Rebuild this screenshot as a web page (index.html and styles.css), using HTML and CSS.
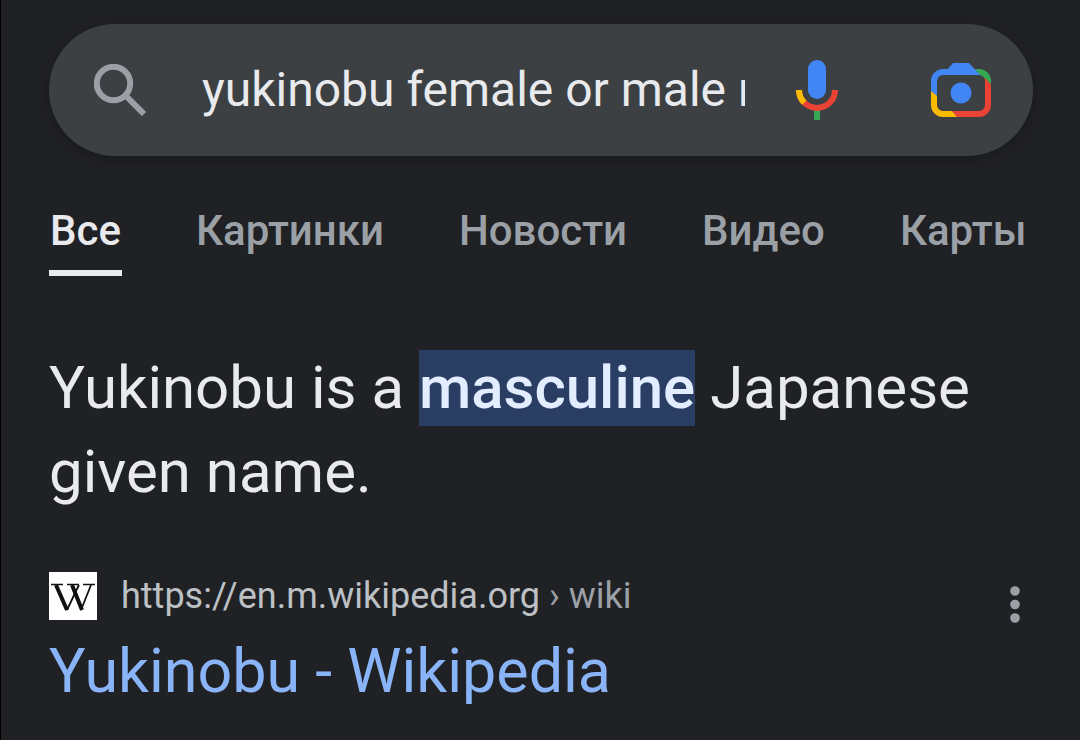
FILE: index.html
```html
<!DOCTYPE html>
<html lang="ru">
<head>
<meta charset="utf-8">
<meta name="viewport" content="width=device-width, initial-scale=1">
<title>yukinobu</title>
<link rel="stylesheet" href="styles.css">
</head>
<body>
<header>
  <form class="search" role="search">
    <button class="icon-button" type="submit" aria-label="Поиск">
      <svg width="52" height="52" viewBox="0 0 52 52" fill="none" stroke="#9aa0a6" stroke-width="6"><circle cx="19.5" cy="19.5" r="16.7"/><path d="M32 32 50 50"/></svg>
    </button>
    <input class="query" type="text" aria-label="Запрос" value="yukinobu female or male name">
    <button class="icon-button" type="button" aria-label="Голосовой поиск">
      <svg width="42" height="60" viewBox="0 0 42 60"><rect x="12" width="18" height="39" rx="9" fill="#4285f4"/><path d="M18 50h6v10h-6z" fill="#34a853"/><path d="M3 30a18 18 0 0 0 36 0" fill="none" stroke="#ea4335" stroke-width="6"/><path d="M3 30a18 18 0 0 0 5.3 12.7" fill="none" stroke="#fbbc04" stroke-width="6"/></svg>
    </button>
    <button class="icon-button lens" type="button" aria-label="Поиск по картинке">
      <svg width="60" height="54" viewBox="0 0 60 54">
        <defs>
          <clipPath id="c1"><path d="M30 30 6 33 0 28V0h39l10 12z"/></clipPath>
          <clipPath id="c2"><path d="M30 30 49 12 39 0h21v21.5L54 15z"/></clipPath>
          <clipPath id="c3"><path d="M30 30 54 15l6 6.500V54H26l-5-6z"/></clipPath>
          <clipPath id="c4"><path d="M30 30 21 48l5 6H0V28l6 5z"/></clipPath>
        </defs>
        <g fill="none" stroke-width="6">
          <rect x="3" y="9" width="54" height="42" rx="9" stroke="#4285f4" clip-path="url(#c1)"/>
          <rect x="3" y="9" width="54" height="42" rx="9" stroke="#34a853" clip-path="url(#c2)"/>
          <rect x="3" y="9" width="54" height="42" rx="9" stroke="#ea4335" clip-path="url(#c3)"/>
          <rect x="3" y="9" width="54" height="42" rx="9" stroke="#fbbc04" clip-path="url(#c4)"/>
        </g>
        <path d="M16 7 22 0h16l11 12H16z" fill="#4285f4"/><circle cx="30" cy="30" r="10.500" fill="#4285f4"/>
      </svg>
    </button>
  </form>
  <nav class="tabs">
    <a class="tab active" href="#all" aria-current="page">Все</a>
    <a class="tab" href="#images">Картинки</a>
    <a class="tab" href="#news">Новости</a>
    <a class="tab" href="#video">Видео</a>
    <a class="tab" href="#maps">Карты</a>
  </nav>
</header>
<main>
  <p class="answer">Yukinobu is a <mark>masculine</mark> Japanese given name.</p>
  <article>
    <div class="source">
      <svg class="favicon" width="48" height="48" viewBox="0 0 48 48" aria-hidden="true"><path fill="#fff" d="M0 0h48v48H0z"/><g fill="none" stroke="#111"><path d="M2 12.500h12M18 12.500h12M34 12.500h12" stroke-width="1.500"/><path d="M7 13l11 25M23 13l10 25" stroke-width="4"/><path d="M18 38l9-19 3-6M32 38l10-25" stroke-width="1.800"/></g></svg>
      <cite class="url">https://en.m.wikipedia.org <span class="crumb">› wiki</span></cite>
      <button class="more" type="button" aria-label="Ещё"><svg width="10" height="38" viewBox="0 0 10 38" fill="#9aa0a6"><circle cx="5" cy="5" r="4.800"/><circle cx="5" cy="18.500" r="4.800"/><circle cx="5" cy="32" r="4.800"/></svg></button>
    </div>
    <h3 class="title"><a href="https://en.m.wikipedia.org/wiki/Yukinobu">Yukinobu - Wikipedia</a></h3>
  </article>
</main>
</body>
</html>
```
FILE: styles.css
```css
* { box-sizing: border-box; }
body {
  margin: 0;
  min-height: 100vh;
  overflow-x: hidden;
  background: #202124;
  border-left: 1px solid #000;
  color: #e8eaed;
  font-family: Roboto, "Liberation Sans", sans-serif;
}
button { padding: 0; border: 0; background: none; cursor: pointer; }
button svg { display: block; }
header { padding-top: 24px; }
.search {
  display: flex;
  align-items: center;
  height: 132px;
  margin: 0 47px 0 48px;
  padding: 0 42px 0 45px;
  border-radius: 66px;
  background: #3c4043;
  box-shadow: 0 3px 12px rgba(0, 0, 0, 0.25);
}
.query {
  flex: 1;
  min-width: 0;
  margin: 0 51px 0 56px;
  padding: 0;
  border: 0;
  outline: 0;
  background: none;
  color: #e8eaed;
  font: 48px/60px Roboto, "Liberation Sans", sans-serif;
}
.lens { margin-left: 93px; }
.tabs {
  display: flex;
  gap: 73px;
  margin-left: 48px;
  padding-top: 36px;
  overflow: hidden;
}
.tab {
  height: 84px;
  padding: 0 1px;
  color: #9aa0a6;
  font-size: 42px;
  font-weight: 500;
  line-height: 78px;
  text-decoration: none;
}
.tab.active { color: #e8eaed; border-bottom: 6px solid #e8eaed; }
main { padding: 70px 48px 0; }
.answer { margin: 0; font-size: 60px; line-height: 84px; }
mark { padding: 2px 0 3px; background: #2a3d63; color: #e2edff; font-weight: 500; }
article { margin-top: 55px; }
.source { display: flex; align-items: center; height: 54px; }
.url { margin-left: 24px; color: #bdc1c6; font-size: 36px; font-style: normal; line-height: 54px; }
.crumb { color: #9aa0a6; }
.more { margin: 18px 12px 0 auto; }
.title { margin: 8px 0 0; font-size: 61px; font-weight: 400; line-height: 80px; }
.title a { color: #8ab4f8; text-decoration: none; }
```
